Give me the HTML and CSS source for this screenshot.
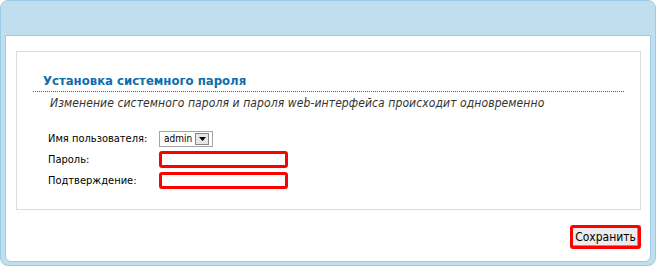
FILE: index.html
```html
<!DOCTYPE html>
<html lang="ru">
<head>
  <meta charset="UTF-8">
  <title>Установка системного пароля</title>
  <link rel="stylesheet" href="styles.css">
</head>
<body>
  <div class="frame">
    <div class="panel">
      <div class="box">
        <h2 class="title">Установка системного пароля</h2>
        <p class="note">Изменение системного пароля и пароля web-интерфейса происходит одновременно</p>
        <form class="fields">
          <div class="row">
            <label>Имя пользователя:</label>
            <div class="select">
              <span class="select-value">admin</span>
              <span class="select-arrow"><svg width="7" height="4" viewBox="0 0 7 4"><path d="M0 0h7L3.5 4z" fill="#000"/></svg></span>
            </div>
          </div>
          <div class="row">
            <label>Пароль:</label>
            <input type="password" class="field">
          </div>
          <div class="row">
            <label>Подтверждение:</label>
            <input type="password" class="field">
          </div>
        </form>
      </div>
      <div class="actions">
        <button type="button" class="save">Сохранить</button>
      </div>
    </div>
  </div>
</body>
</html>
```
FILE: styles.css
```css
body { margin: 0; background: #fff; font-family: "DejaVu Sans Condensed", "DejaVu Sans", sans-serif; }
.frame { width: 656px; height: 266px; box-sizing: border-box; border: 1px solid #9ecbe4; border-radius: 8px; background: #bfdfee; padding: 34px 4px 3px 4px; }
.panel { height: 100%; box-sizing: border-box; background: #fff; border: 1px solid #9ecbe4; border-radius: 0 0 6px 6px; padding: 15px 9px 0 10px; }
.box { border: 1px solid #dcdcdc; height: 159px; box-sizing: border-box; padding: 20px 16px 0 16px; }
.title { margin: 0; padding: 0 0 2px 10px; font-size: 13px; font-weight: bold; color: #0b6fae; border-bottom: 1px dotted #1a6e9e; line-height: 17px; }
.note { margin: 3px 0 0 17px; font-size: 12px; font-style: italic; color: #333; line-height: 16px; letter-spacing: 0.1px; }
.fields { margin: 17px 0 0 15px; }
.row { display: flex; align-items: center; height: 21px; font-size: 11px; color: #000; }
.row label { width: 111px; }
.select { display: flex; align-items: center; height: 16px; width: 54px; box-sizing: border-box; border: 1px solid #a5a5a5; font-size: 10px; }
.select-value { flex: 1; padding-left: 4px; }
.select-arrow { width: 14px; height: 12px; margin-right: 3px; background: #e6e6e6; border: 1px solid #888; box-sizing: border-box; display: flex; align-items: center; justify-content: center; }
.field { width: 129px; height: 17px; box-sizing: border-box; border: 3px solid #f00; border-radius: 3px; margin: 0; padding: 0; }
.actions { display: flex; justify-content: flex-end; padding: 15px 0 0 0; }
.save { height: 24px; width: 71px; margin: 0; padding: 0; border: 3px solid #f00; border-radius: 3px; background: #ececec; font-family: inherit; font-size: 12px; color: #000; box-shadow: inset -1px -1px 0 #999; }
```
